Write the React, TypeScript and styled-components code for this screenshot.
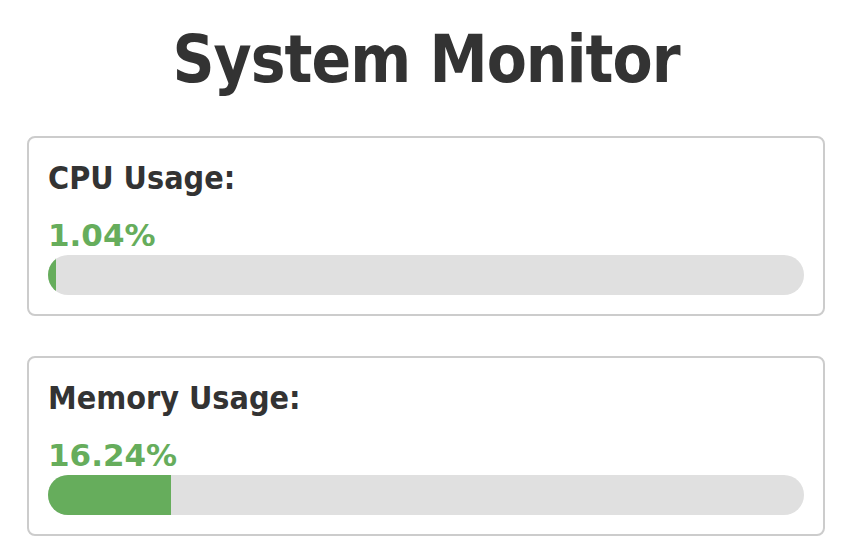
import styled, { createGlobalStyle } from "styled-components";

const GlobalStyle = createGlobalStyle`
  body {
    margin: 0;
    background: #ffffff;
    font-family: "DejaVu Sans Condensed", "DejaVu Sans", sans-serif;
    color: #333333;
  }
`;

interface Metric {
  label: string;
  value: number;
}

const metrics: Metric[] = [
  { label: "CPU Usage:", value: 1.04 },
  { label: "Memory Usage:", value: 16.24 },
];

export default function App() {
  return (
    <>
      <GlobalStyle />
      <Page>
        <Title>System Monitor</Title>
        {metrics.map((m) => (
          <Card key={m.label}>
            <Label>{m.label}</Label>
            <Value>{m.value.toFixed(2)}%</Value>
            <Track>
              <Fill style={{ width: `${m.value}%` }} />
            </Track>
          </Card>
        ))}
      </Page>
    </>
  );
}

const Page = styled.div`
  box-sizing: border-box;
  padding: 20px 35px 0 27px;
  display: flex;
  flex-direction: column;
  gap: 40px;
`;

const Title = styled.h1`
  margin: 0 0 -4px;
  text-align: center;
  font-size: 65px;
  font-weight: 700;
  line-height: 80px;
  letter-spacing: -1px;
  color: #333333;
`;

const Card = styled.div`
  box-sizing: border-box;
  height: 180px;
  border: 2px solid #cccccc;
  border-radius: 8px;
  padding: 20px 19px 19px;
  display: flex;
  flex-direction: column;
`;

const Label = styled.h2`
  margin: 0;
  font-size: 32px;
  font-weight: 700;
  line-height: 41px;
  color: #333333;
`;

const Value = styled.div`
  margin-top: 16px;
  margin-bottom: -6px;
  font-family: "DejaVu Sans", sans-serif;
  font-size: 31px;
  font-weight: 700;
  line-height: 40px;
  color: #66ad5c;
`;

const Track = styled.div`
  margin-top: auto;
  height: 40px;
  background: #e0e0e0;
  border-radius: 20px;
  overflow: hidden;
`;

const Fill = styled.div`
  height: 100%;
  background: #66ad5c;
`;
